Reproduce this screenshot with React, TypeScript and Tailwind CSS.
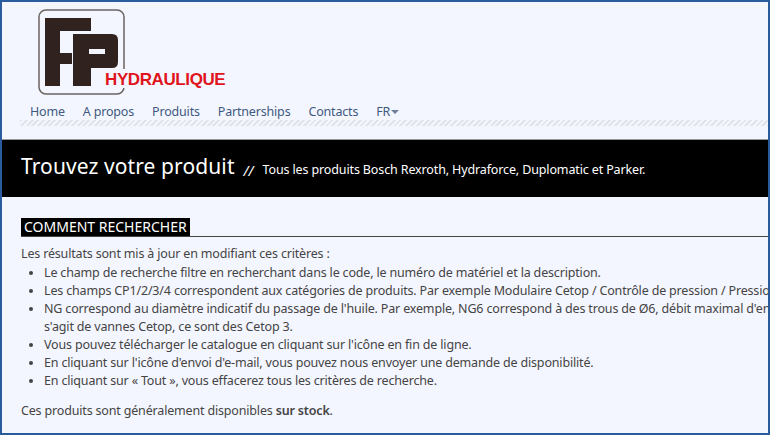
import React from 'react';

const navItems = ['Home', 'A propos', 'Produits', 'Partnerships', 'Contacts'];

const tips: React.ReactNode[] = [
  "Le champ de recherche filtre en recherchant dans le code, le numéro de matériel et la description.",
  "Les champs CP1/2/3/4 correspondent aux catégories de produits. Par exemple Modulaire Cetop / Contrôle de pression / Pression directe.",
  <>
    NG correspond au diamètre indicatif du passage de l'huile. Par exemple, NG6 correspond à des trous de Ø6, débit maximal d'environ 60 l/min. S'il
    <br />
    s'agit de vannes Cetop, ce sont des Cetop 3.
  </>,
  "Vous pouvez télécharger le catalogue en cliquant sur l'icône en fin de ligne.",
  "En cliquant sur l'icône d'envoi d'e-mail, vous pouvez nous envoyer une demande de disponibilité.",
  "En cliquant sur « Tout », vous effacerez tous les critères de recherche.",
];

function Logo() {
  return (
    <svg width="190" height="88" viewBox="0 0 190 88" className="block">
      <rect x="1" y="1" width="85" height="84" rx="7" fill="none" stroke="#6b6361" strokeWidth="1.5" />
      <path d="M7 9H53V22H22V44H34V55H22V77H7Z" fill="#30231f" />
      <path d="M35 25H74Q80 25 80 31V53Q80 59 74 59H53V77H35ZM51 40V45H67V40Z" fillRule="evenodd" fill="#30231f" />
      <rect x="66" y="60" width="24" height="19" fill="#f4f6ff" />
    </svg>
  );
}

export default function App() {
  return (
    <div className="h-[435px] w-[770px] overflow-hidden border-2 border-[#2a5b9c] bg-[#f4f6ff] font-['Noto_Sans',sans-serif] text-[#444]">
      <header className="h-[137px]">
        <div className="relative ml-[36px] pt-[7px]">
          <Logo />
          <span className="absolute left-[67px] top-[68px] font-['Liberation_Sans',sans-serif] text-[17px] font-bold leading-[20px] tracking-[-0.4px] text-[#e0141c]">
            HYDRAULIQUE
          </span>
        </div>
        <nav className="ml-[28px] mt-[5px] flex items-center gap-[18px] text-[12.5px] leading-[19px] tracking-[-0.18px] text-[#3f5a80]">
          {navItems.map((item) => (
            <a key={item}>{item}</a>
          ))}
          <a className="flex items-center">
            FR
            <span className="ml-[1px] h-0 w-0 border-x-[4px] border-t-[4px] border-x-transparent border-t-[#6d7f99]" />
          </a>
        </nav>
        <div className="ml-[18px] mt-[-1px] h-[6px] bg-[repeating-linear-gradient(135deg,#e2e4ea_0px,#e2e4ea_2px,#f4f6ff_2px,#f4f6ff_4px)]" />
      </header>

      <section className="flex h-[58px] items-center border-t border-[#999] bg-black pb-[5px] pl-[19px] text-white">
        <h1 className="text-[21px] leading-[28px] tracking-[0.1px]">Trouvez votre produit</h1>
        <em className="ml-[9px] mt-[8px] text-[14px]">//</em>
        <p className="ml-[9px] mt-[8px] text-[12.5px] tracking-[-0.13px]">Tous les produits Bosch Rexroth, Hydraforce, Duplomatic et Parker.</p>
      </section>

      <main className="ml-[19px] mt-[21px] text-[12.5px] leading-[18px] tracking-[-0.17px]">
        <h2 className="border-b border-[#444] leading-[18px]">
          <span className="inline-block bg-black px-[3px] align-top text-[14px] tracking-normal text-white">COMMENT RECHERCHER</span>
        </h2>
        <p className="mt-[8px]">Les résultats sont mis à jour en modifiant ces critères :</p>
        <ul className="ml-[23px] mt-[1px] list-disc whitespace-nowrap">
          {tips.map((tip, i) => (
            <li key={i}>{tip}</li>
          ))}
        </ul>
        <p className="mt-[12px]">
          Ces produits sont généralement disponibles <strong className="font-semibold">sur stock</strong>.
        </p>
      </main>
    </div>
  );
}
